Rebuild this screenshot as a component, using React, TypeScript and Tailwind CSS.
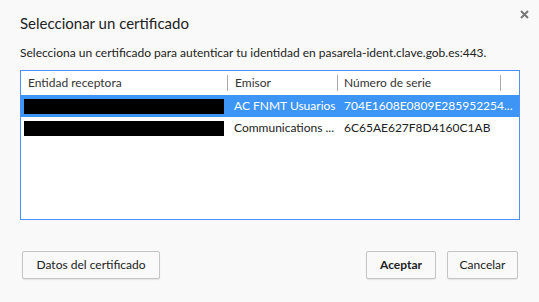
import React from 'react';

const FONT = { fontFamily: 'Lato, "Open Sans", sans-serif' };

interface Cert {
  emisor: string;
  serie: string;
  selected?: boolean;
}

const CERTS: Cert[] = [
  { emisor: 'AC FNMT Usuarios', serie: '704E1608E0809E285952254...', selected: true },
  { emisor: 'Communications ...', serie: '6C65AE627F8D4160C1AB' },
];

function Row({ c }: { c: Cert }) {
  return (
    <div className={`flex h-[22px] items-center text-[12px] ${c.selected ? 'bg-[#3d95f5] text-white' : 'text-[#222]'}`}>
      <div className="w-[207px] pl-[3px]">
        <div className="h-[15px] w-[200px] bg-black" />
      </div>
      <div className="w-[110px] whitespace-nowrap pl-[6px]">{c.emisor}</div>
      <div className="flex-1 whitespace-nowrap pl-[6px]">{c.serie}</div>
    </div>
  );
}

export default function App() {
  return (
    <div className="relative h-[302px] w-[539px] bg-[#f9f9f9] text-[#222]" style={FONT}>
      <button className="absolute right-[10px] top-[9px] flex h-[10px] w-[10px] items-center justify-center">
        <svg width="9" height="9" viewBox="0 0 9 9">
          <path d="M1 1 L8 8 M8 1 L1 8" stroke="#777" strokeWidth="2" />
        </svg>
      </button>

      <div className="px-[20px] pt-[13px]">
        <h1 className="text-[15px] leading-[20px]">Seleccionar un certificado</h1>
        <p className="mt-[12px] text-[12px] leading-[16px]">
          Selecciona un certificado para autenticar tu identidad en pasarela-ident.clave.gob.es:443.
        </p>

        {/* Certificate table */}
        <div className="mt-[9px] h-[150px] w-[500px] border border-[#4d90fe] bg-white">
          <div className="flex h-[24px] items-center text-[12px] text-[#333]">
            <div className="flex h-[16px] w-[207px] items-center border-r border-[#aaa] pl-[7px]">Entidad receptora</div>
            <div className="flex h-[16px] w-[110px] items-center border-r border-[#aaa] pl-[7px]">Emisor</div>
            <div className="flex h-[16px] w-[163px] items-center border-r border-[#aaa] pl-[6px]">Número de serie</div>
          </div>
          {CERTS.map(c => (
            <Row key={c.serie} c={c} />
          ))}
        </div>
      </div>

      {/* Buttons */}
      <div className="flex items-center px-[22px] pt-[31px] text-[12px]">
        <button className="h-[28px] w-[138px] rounded-[2px] border border-[#c4c4c4] bg-[#f9f9f9] shadow-[0_1px_1px_rgba(0,0,0,0.08)]">
          Datos del certificado
        </button>
        <div className="flex-1" />
        <button className="h-[28px] w-[70px] rounded-[2px] border border-[#c4c4c4] bg-[#f9f9f9] font-bold shadow-[0_1px_1px_rgba(0,0,0,0.08)]">
          Aceptar
        </button>
        <button className="ml-[11px] mr-[-1px] h-[28px] w-[71px] rounded-[2px] border border-[#c4c4c4] bg-[#f9f9f9] shadow-[0_1px_1px_rgba(0,0,0,0.08)]">
          Cancelar
        </button>
      </div>
    </div>
  );
}
